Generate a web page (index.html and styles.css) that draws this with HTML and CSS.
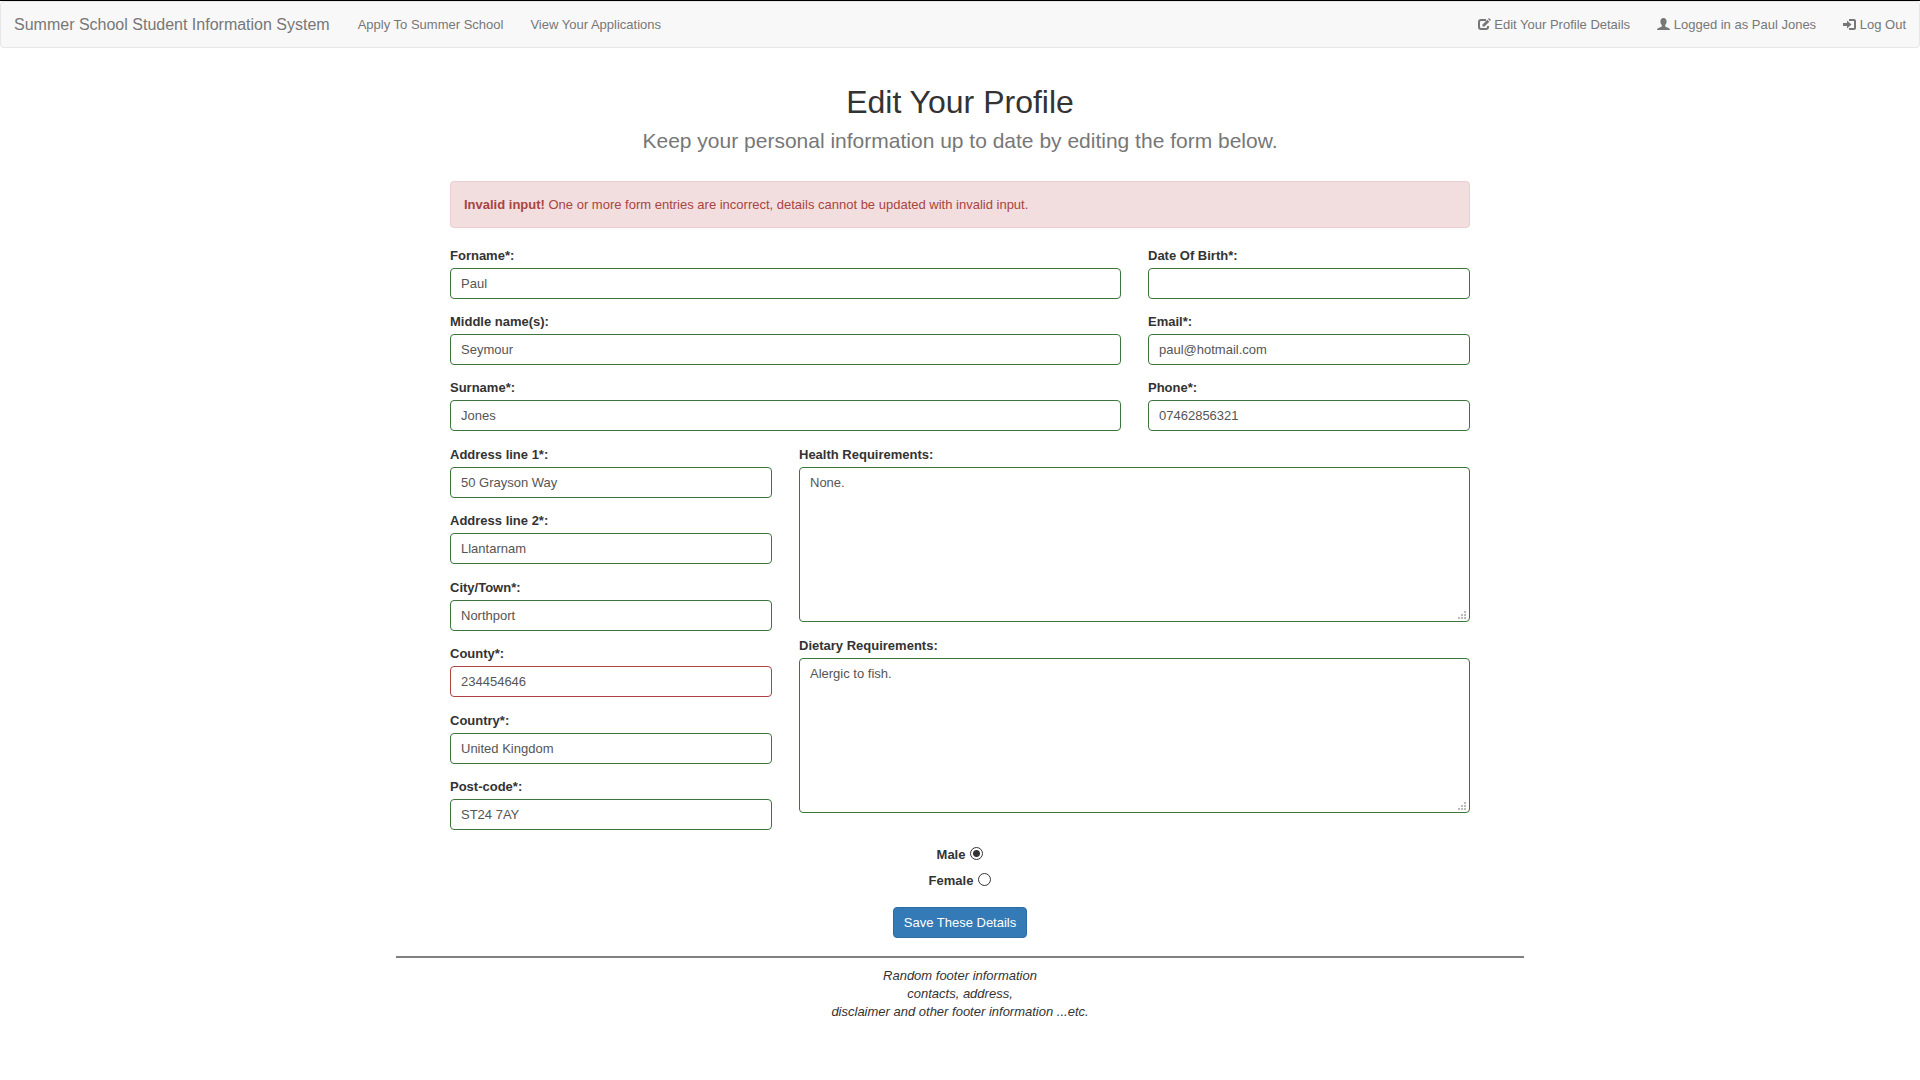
FILE: index.html
```html
<!DOCTYPE html>
<html lang="en">
<head>
<meta charset="utf-8">
<title>Edit Your Profile</title>
<link rel="stylesheet" href="styles.css">
</head>
<body>
<nav class="navbar">
  <a class="brand" href="#">Summer School Student Information System</a>
  <a class="nav-link" href="#">Apply To Summer School</a>
  <a class="nav-link" href="#">View Your Applications</a>
  <div class="nav-right">
    <a class="nav-link" href="#"><svg class="icon" viewBox="0 0 13 13"><path fill="none" stroke="currentColor" stroke-width="2" d="M8 2H3Q1 2 1 4V9Q1 11 3 11H8Q10 11 10 9V8"/><path fill="currentColor" d="M4.500 8.500V6.500L9.300 1.700L11.300 3.700L6.500 8.500ZM10 1L11 0L13 2L12 3Z"/></svg> Edit Your Profile Details</a>
    <a class="nav-link" href="#"><svg class="icon" viewBox="0 0 13 13"><path fill="currentColor" d="M6.500 0C8.500 0 9.600 1.300 9.600 3.200C9.600 5 9 6.200 8.200 7V8.400L12 10.200Q13 10.700 13 12H0Q0 10.700 1 10.200L4.800 8.400V7C4 6.200 3.400 5 3.400 3.200C3.400 1.300 4.500 0 6.500 0Z"/></svg> Logged in as Paul Jones</a>
    <a class="nav-link" href="#"><svg class="icon" viewBox="0 0 13 13"><path fill="none" stroke="currentColor" stroke-width="2" d="M6 2H11Q12 2 12 3V10Q12 11 11 11H6"/><path fill="currentColor" d="M0 5H4V2.500L8.500 6.500L4 10.500V8H0Z"/></svg> Log Out</a>
  </div>
</nav>
<main class="container">
  <header class="page-title">
    <h1>Edit Your Profile</h1>
    <p class="lead">Keep your personal information up to date by editing the form below.</p>
  </header>
  <form class="profile">
    <div class="alert" role="alert"><strong>Invalid input!</strong> One or more form entries are incorrect, details cannot be updated with invalid input.</div>
    <div class="columns wide-left">
      <div class="stack">
        <div class="field"><label for="forename">Forname*:</label><input class="control" id="forename" type="text" value="Paul"></div>
        <div class="field"><label for="middle">Middle name(s):</label><input class="control" id="middle" type="text" value="Seymour"></div>
        <div class="field"><label for="surname">Surname*:</label><input class="control" id="surname" type="text" value="Jones"></div>
      </div>
      <div class="stack">
        <div class="field"><label for="dob">Date Of Birth*:</label><input class="control" id="dob" type="text"></div>
        <div class="field"><label for="email">Email*:</label><input class="control" id="email" type="email" value="paul@hotmail.com"></div>
        <div class="field"><label for="phone">Phone*:</label><input class="control" id="phone" type="tel" value="07462856321"></div>
      </div>
    </div>
    <div class="columns wide-right">
      <div class="stack address">
        <div class="field"><label for="address1">Address line 1*:</label><input class="control" id="address1" type="text" value="50 Grayson Way"></div>
        <div class="field"><label for="address2">Address line 2*:</label><input class="control" id="address2" type="text" value="Llantarnam"></div>
        <div class="field"><label for="city">City/Town*:</label><input class="control" id="city" type="text" value="Northport"></div>
        <div class="field"><label for="county">County*:</label><input class="control invalid" id="county" type="text" value="234454646"></div>
        <div class="field"><label for="country">Country*:</label><input class="control" id="country" type="text" value="United Kingdom"></div>
        <div class="field"><label for="postcode">Post-code*:</label><input class="control" id="postcode" type="text" value="ST24 7AY"></div>
      </div>
      <div class="stack notes">
        <div class="field"><label for="health">Health Requirements:</label><div class="area"><textarea class="control" id="health">None.</textarea><svg class="grip" viewBox="0 0 8 8"><path d="M6 0h2v2H6zM3 3h2v2H3zM6 3h2v2H6zM0 6h2v2H0zM3 6h2v2H3zM6 6h2v2H6z"/></svg></div></div>
        <div class="field"><label for="diet">Dietary Requirements:</label><div class="area"><textarea class="control" id="diet">Alergic to fish.</textarea><svg class="grip" viewBox="0 0 8 8"><path d="M6 0h2v2H6zM3 3h2v2H3zM6 3h2v2H6zM0 6h2v2H0zM3 6h2v2H3zM6 6h2v2H6z"/></svg></div></div>
      </div>
    </div>
    <div class="choices">
      <div class="choice"><label for="male">Male</label><input class="radio" id="male" type="radio" name="gender" checked></div>
      <div class="choice"><label for="female">Female</label><input class="radio" id="female" type="radio" name="gender"></div>
    </div>
    <button class="save" type="submit">Save These Details</button>
  </form>
  <footer class="footer">Random footer information<br>contacts, address,<br>disclaimer and other footer information ...etc.</footer>
</main>
</body>
</html>
```
FILE: styles.css
```css
* {
  box-sizing: border-box;
}

body {
  margin: 0;
  border-top: 1px solid #000;
  background: #fff;
  color: #333;
  font: 13px/18px "Liberation Sans", Arial, sans-serif;
}

.navbar {
  display: flex;
  align-items: center;
  height: 47px;
  padding: 0 13px;
  border: 1px solid #e7e7e7;
  border-radius: 4px;
  background: #f8f8f8;
}

.navbar a {
  color: #777;
  text-decoration: none;
}

.brand {
  margin-right: 14px;
  font-size: 16px;
}

.nav-link {
  padding: 0 13px 0 14px;
}

.nav-right {
  display: flex;
  margin-left: auto;
  margin-right: -13px;
}

.icon {
  width: 13px;
  height: 13px;
  vertical-align: -2px;
}

.container {
  max-width: 1128px;
  margin: 0 auto;
}

.page-title {
  padding-top: 36px;
  text-align: center;
}

h1 {
  margin: 0;
  font-size: 32px;
  font-weight: 400;
  line-height: 36px;
}

.lead {
  margin: 8px 0 0;
  color: #777;
  font-size: 21px;
  line-height: 26px;
}

.profile {
  display: flex;
  flex-direction: column;
  padding: 0 54px 18px;
}

.alert {
  margin: 27px 0 18px;
  padding: 13px;
  border: 1px solid #ebccd1;
  border-radius: 4px;
  background: #f2dede;
  color: #a94442;
  line-height: 19px;
}

.columns {
  display: grid;
  gap: 27px;
}

.wide-left {
  grid-template-columns: 671fr 322fr;
  margin-bottom: 14px;
}

.wide-right {
  grid-template-columns: 322fr 671fr;
}

.stack {
  display: flex;
  flex-direction: column;
  gap: 13px;
}

.address {
  min-height: 385px;
  justify-content: space-between;
  gap: 0;
}

.notes {
  gap: 14px;
}

.field {
  display: flex;
  flex-direction: column;
  gap: 3px;
}

label {
  font-weight: 700;
}

.field label {
  padding-top: 1px;
}

.control {
  display: block;
  width: 100%;
  height: 31px;
  padding: 5px 10px;
  border: 1px solid #3c763d;
  border-radius: 4px;
  background: #fff;
  color: #555;
  font: inherit;
}

.invalid {
  border-color: #a94442;
}

.area {
  position: relative;
}

textarea.control {
  height: 155px;
  padding-top: 6px;
  resize: none;
}

.grip {
  position: absolute;
  right: 4px;
  bottom: 3px;
  width: 8px;
  height: 8px;
  fill: #bbb;
}

.choices {
  display: flex;
  flex-direction: column;
  align-items: center;
  gap: 8px;
  margin-top: 16px;
}

.choice {
  display: flex;
  gap: 5px;
}

.radio {
  appearance: none;
  width: 13px;
  height: 13px;
  margin: 1px 0 0;
  border: 1px solid #333;
  border-radius: 50%;
  background: #fff;
}

.radio:checked {
  background: radial-gradient(circle, #333 0 3px, #fff 4px);
}

.save {
  align-self: center;
  margin-top: 17px;
  padding: 5px 10px;
  border: 1px solid #2e6da4;
  border-radius: 4px;
  background: #337ab7;
  color: #fff;
  font: inherit;
  line-height: 19px;
}

.footer {
  padding-top: 9px;
  border-top: 2px solid #808080;
  text-align: center;
  font-style: italic;
}
```
